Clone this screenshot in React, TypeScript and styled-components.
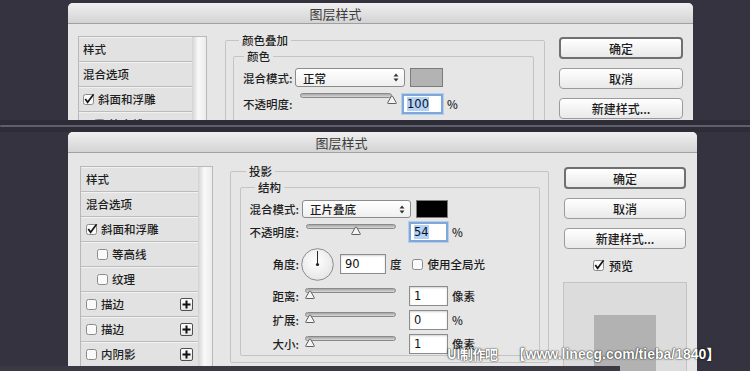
import React from 'react';
import styled, { createGlobalStyle, css } from 'styled-components';

const CJK = `"Noto Sans CJK SC", "Noto Sans", sans-serif`;
const NUM = `"DejaVu Sans", "Liberation Sans", sans-serif`;

const GlobalStyle = createGlobalStyle`
  html, body {
    margin: 0;
    padding: 0;
    background: #34333f;
  }
  body {
    font-family: ${CJK};
    color: #222;
  }
`;

const Screen = styled.div`
  position: relative;
  width: 750px;
  height: 371px;
  display: flex;
  flex-direction: column;
  overflow: hidden;
  background: #34333f;
`;

const Slice = styled.div<{ $height?: number; $top?: number; $left: number }>`
  flex: ${(p) => (p.$height ? 'none' : '1')};
  height: ${(p) => (p.$height ? `${p.$height}px` : 'auto')};
  min-height: 0;
  box-sizing: border-box;
  padding: ${(p) => p.$top ?? 0}px 0 0 ${(p) => p.$left}px;
  overflow: hidden;
`;

const Seam = styled.div`
  flex: none;
  height: 12px;
  box-sizing: border-box;
  padding-top: 5px;
  background: #2e2d37;
`;

const SeamLine = styled.div`
  height: 2px;
  background: #5f5e6d;
  border-radius: 2px 0 0 2px;
`;

const Window = styled.div<{ $width: number }>`
  width: ${(p) => p.$width}px;
  height: 100%;
  display: flex;
  flex-direction: column;
  background: #e6e6e6;
  border-radius: 5px 5px 0 0;
  overflow: hidden;
`;

const TitleBar = styled.div<{ $shift: number }>`
  flex: none;
  height: 21px;
  box-sizing: border-box;
  display: flex;
  align-items: center;
  justify-content: center;
  padding-right: ${(p) => p.$shift * 2}px;
  background: linear-gradient(#f0f0f0, #d3d3d3);
  border-bottom: 1px solid #a0a0a0;
  font-size: 13px;
  color: #3c3c3c;
`;

const Body = styled.div<{ $pad: string }>`
  flex: 1;
  min-height: 0;
  display: flex;
  align-items: flex-start;
  padding: ${(p) => p.$pad};
`;

const Column = styled.div<{ $width: number; $ml?: number; $mt?: number }>`
  flex: none;
  width: ${(p) => p.$width}px;
  margin: ${(p) => p.$mt ?? 0}px 0 0 ${(p) => p.$ml ?? 0}px;
  box-sizing: border-box;
  display: flex;
  flex-direction: column;
`;

/* ---- style list ---- */

const StyleList = styled.div<{ $width: number; $mt: number }>`
  flex: none;
  width: ${(p) => p.$width}px;
  margin-top: ${(p) => p.$mt}px;
  box-sizing: border-box;
  display: flex;
  border: 1px solid #b8b8b8;
  background: #e2e2e2;
`;

const ListItems = styled.div`
  flex: 1;
  display: flex;
  flex-direction: column;
`;

const ListTrack = styled.div`
  flex: none;
  width: 14px;
  background: linear-gradient(to right, #d2d2d2, #f9f9f9 45%, #ececec);
`;

const ListRow = styled.div<{ $indent: number }>`
  height: 25px;
  box-sizing: border-box;
  display: flex;
  align-items: center;
  gap: 4px;
  padding: 0 5px 0 ${(p) => p.$indent}px;
  border-bottom: 1px solid #bcbcbc;
  box-shadow: inset 0 1px 0 #f2f2f2;
  font-size: 11.5px;
  font-weight: 500;
  color: #1e1e1e;
`;

const PlusBox = styled.span`
  margin-left: auto;
  width: 13px;
  height: 13px;
  box-sizing: border-box;
  display: flex;
  align-items: center;
  justify-content: center;
  border: 1px solid #4f4f4f;
  border-radius: 2px;
  background: linear-gradient(#ffffff, #e6e6e6);
`;

const CheckSvg = styled.svg`
  flex: none;
  overflow: visible;
`;

const Check = ({ on }: { on?: boolean }) => (
  <CheckSvg width="11" height="11" viewBox="0 0 11 11">
    <rect x="0.5" y="0.5" width="10" height="10" rx="2" fill="#fafafa" stroke="#8a8a8a" />
    {on && <path d="M2.3 5 L4.6 8.3 L10.6 0.2" fill="none" stroke="#151515" strokeWidth="1.7" />}
  </CheckSvg>
);

const Plus = () => (
  <PlusBox>
    <svg width="9" height="9" viewBox="0 0 9 9">
      <path d="M4.5 0.5 V8.5 M0.5 4.5 H8.5" stroke="#111" strokeWidth="2" />
    </svg>
  </PlusBox>
);

type Entry = { label: string; check?: boolean; on?: boolean; sub?: boolean; plus?: boolean };

const entries: Entry[] = [
  { label: '样式' },
  { label: '混合选项' },
  { label: '斜面和浮雕', check: true, on: true },
  { label: '等高线', check: true, sub: true },
  { label: '纹理', check: true, sub: true },
  { label: '描边', check: true, plus: true },
  { label: '描边', check: true, plus: true },
  { label: '内阴影', check: true, plus: true },
];

const Styles = ({ width, mt, indent, rows }: { width: number; mt: number; indent: number; rows: number }) => (
  <StyleList $width={width} $mt={mt}>
    <ListItems>
      {entries.slice(0, rows).map((e, i) => (
        <ListRow key={i} $indent={e.sub ? indent + 11 : indent}>
          {e.check && <Check on={e.on} />}
          {e.label}
          {e.plus && <Plus />}
        </ListRow>
      ))}
    </ListItems>
    <ListTrack />
  </StyleList>
);

/* ---- groups and form ---- */

const Group = styled.fieldset<{ $margin?: string }>`
  margin: ${(p) => p.$margin ?? '0'};
  padding: 0;
  min-width: 0;
  border: 1px solid #c4c4c4;
  border-radius: 2px;
`;

const GroupTitle = styled.legend<{ $ml: number }>`
  margin-left: ${(p) => p.$ml}px;
  padding: 0 3px;
  font-size: 11.5px;
  font-weight: 500;
  line-height: 16px;
  color: #1e1e1e;
`;

const Form = styled.div<{ $pad: string; $gap: number }>`
  display: flex;
  flex-direction: column;
  gap: ${(p) => p.$gap}px;
  padding: ${(p) => p.$pad};
`;

const FormRow = styled.div<{ $h: number }>`
  height: ${(p) => p.$h}px;
  display: flex;
  align-items: center;
`;

const Label = styled.span<{ $w: number }>`
  flex: none;
  width: ${(p) => p.$w}px;
  text-align: right;
  font-size: 11.5px;
  font-weight: 500;
  white-space: nowrap;
  color: #1e1e1e;
`;

const Unit = styled.span<{ $ml?: number }>`
  flex: none;
  margin-left: ${(p) => p.$ml ?? 4}px;
  font-size: 11.5px;
  font-weight: 500;
  color: #1e1e1e;
`;

const Select = styled.div<{ $w: number; $ml: number }>`
  flex: none;
  width: ${(p) => p.$w}px;
  height: 100%;
  margin-left: ${(p) => p.$ml}px;
  box-sizing: border-box;
  display: flex;
  align-items: center;
  justify-content: space-between;
  padding: 0 5px 0 7px;
  border: 1px solid #8b8b8b;
  border-radius: 3px;
  background: linear-gradient(#ffffff, #efefef);
  font-size: 11.5px;
  font-weight: 500;
  color: #1e1e1e;
`;

const Swatch = styled.div<{ $w: number; $ml: number; $color: string }>`
  flex: none;
  width: ${(p) => p.$w}px;
  height: 100%;
  margin-left: ${(p) => p.$ml}px;
  box-sizing: border-box;
  border: 1px solid #7c7c7c;
  background: ${(p) => p.$color};
`;

const Field = styled.div<{ $w: number; $ml: number; $focus?: boolean }>`
  flex: none;
  width: ${(p) => p.$w}px;
  height: 20px;
  margin-left: ${(p) => p.$ml}px;
  box-sizing: border-box;
  display: flex;
  align-items: center;
  padding-left: 4px;
  border: 1px solid #8c8c8c;
  background: #fff;
  box-shadow: inset 0 1px 2px rgba(0, 0, 0, 0.18);
  font-family: ${NUM};
  font-size: 11.5px;
  color: #111;
  ${(p) =>
    p.$focus &&
    css`
      padding-left: 3px;
      border: 2px solid #7ea7da;
      box-shadow: 0 0 0 1px #b6cdeb;
    `}
`;

const Selected = styled.span`
  background: #b2d2fa;
`;

const SliderBox = styled.div<{ $w: number; $ml: number; $dy?: number }>`
  position: relative;
  flex: none;
  align-self: flex-start;
  width: ${(p) => p.$w}px;
  height: 20px;
  margin: ${(p) => p.$dy ?? 0}px 0 0 ${(p) => p.$ml}px;
`;

const SliderTrack = styled.div`
  height: 5px;
  margin-top: 2px;
  box-sizing: border-box;
  border: 1px solid #8a8a8a;
  border-radius: 3px;
  background: linear-gradient(#a6a6a6, #d8d8d8);
`;

const SliderThumb = styled.svg<{ $pos: number }>`
  position: absolute;
  top: 4px;
  left: ${(p) => p.$pos}px;
`;

const Slider = ({ w, ml, pos, dy }: { w: number; ml: number; pos: number; dy?: number }) => (
  <SliderBox $w={w} $ml={ml} $dy={dy}>
    <SliderTrack />
    <SliderThumb $pos={pos} width="10" height="9" viewBox="0 0 10 9">
      <path d="M1.2 8.5 Q0.3 8.5 0.8 7.6 L4.4 1.2 Q5 0.3 5.6 1.2 L9.2 7.6 Q9.7 8.5 8.8 8.5 Z" fill="#f4f4f4" stroke="#5e5e5e" />
    </SliderThumb>
  </SliderBox>
);

const Arrows = () => (
  <svg width="6" height="9" viewBox="0 0 6 9">
    <path d="M3 0.5 L5.5 3.5 H0.5 Z M3 8.5 L5.5 5.5 H0.5 Z" fill="#333" />
  </svg>
);

const DialSvg = styled.svg<{ $ml: number }>`
  flex: none;
  margin-left: ${(p) => p.$ml}px;
`;

const Dial = ({ ml }: { ml: number }) => (
  <DialSvg $ml={ml} width="33" height="33" viewBox="0 0 33 33">
    <defs>
      <radialGradient id="dialFill" cx="0.45" cy="0.4" r="0.7">
        <stop offset="0" stopColor="#ffffff" />
        <stop offset="1" stopColor="#e2e2e2" />
      </radialGradient>
    </defs>
    <circle cx="16.5" cy="16.5" r="15.8" fill="url(#dialFill)" stroke="#8c8c8c" />
    <path d="M16.5 16.5 V3" stroke="#2a2a2a" strokeWidth="1" />
    <circle cx="16.5" cy="16.5" r="1.6" fill="#222" />
  </DialSvg>
);

const InlineCheck = styled.span<{ $ml: number }>`
  display: flex;
  align-items: center;
  gap: 5px;
  margin-left: ${(p) => p.$ml}px;
  font-size: 11.5px;
  font-weight: 500;
  color: #1e1e1e;
`;

/* ---- buttons and preview ---- */

const DlgButton = styled.button<{ $primary?: boolean; $mt?: number }>`
  width: 100%;
  height: 21px;
  margin: ${(p) => p.$mt ?? 0}px 0 0;
  padding: 0;
  box-sizing: border-box;
  border: 1px solid #9b9b9b;
  border-radius: 4px;
  background: linear-gradient(#ffffff, #e9e9e9);
  font-family: ${CJK};
  font-size: 12px;
  font-weight: 500;
  color: #1c1c1c;
  ${(p) =>
    p.$primary &&
    css`
      height: 22px;
      border: 2px solid #707070;
    `}
`;

const PreviewToggle = styled.label`
  display: flex;
  align-items: center;
  gap: 5px;
  height: 14px;
  margin-top: 9px;
  padding-left: 29px;
  font-size: 12px;
  font-weight: 500;
  color: #1e1e1e;
`;

const PreviewBox = styled.div`
  height: 100px;
  margin: 10px -1px 0;
  box-sizing: border-box;
  padding: 32px 0 0 30px;
  border: 1px solid #c3c3c3;
  background: #dcdcdc;
`;

const PreviewShape = styled.div`
  width: 62px;
  height: 80px;
  background: #b2b2b2;
`;

const Buttons = ({ width, ml, mt, preview }: { width: number; ml: number; mt: number; preview?: boolean }) => (
  <Column $width={width} $ml={ml} $mt={mt}>
    <DlgButton $primary>确定</DlgButton>
    <DlgButton $mt={9}>取消</DlgButton>
    <DlgButton $mt={9}>新建样式...</DlgButton>
    {preview && (
      <>
        <PreviewToggle>
          <Check on />
          预览
        </PreviewToggle>
        <PreviewBox>
          <PreviewShape />
        </PreviewBox>
      </>
    )}
  </Column>
);

/* ---- overlays ---- */

const BottomStrip = styled.div`
  position: absolute;
  left: 0;
  bottom: 0;
  width: 620px;
  height: 5px;
  background: #3a3944;
`;

const Watermark = styled.div`
  position: absolute;
  left: 447px;
  top: 343px;
  display: flex;
  align-items: center;
  gap: 14px;
  color: #ffffff;
  text-shadow: 0 0 2px rgba(0, 0, 0, 0.75), 0 0 1px rgba(0, 0, 0, 0.9);
  pointer-events: none;
  white-space: nowrap;
`;

const WmBrand = styled.span`
  font-family: ${CJK};
  font-size: 13px;
  font-weight: 700;
  letter-spacing: -0.5px;
`;

const WmUrl = styled.span`
  font-family: "Liberation Sans", ${CJK};
  font-size: 14px;
  font-weight: 700;
`;

export default function App() {
  return (
    <Screen>
      <GlobalStyle />
      <Slice $height={120} $top={3} $left={68}>
        <Window $width={625}>
          <TitleBar $shift={45}>图层样式</TitleBar>
          <Body $pad="8px 10px 0 10px">
            <Styles width={129} mt={4} indent={4} rows={4} />
            <Column $width={320} $ml={18}>
              <Group>
                <GroupTitle $ml={13}>颜色叠加</GroupTitle>
                <Group $margin="0 10px 8px 7px">
                  <GroupTitle $ml={10}>颜色</GroupTitle>
                  <Form $pad="4px 0 8px 9px" $gap={7}>
                    <FormRow $h={19}>
                      <Label $w={48}>混合模式:</Label>
                      <Select $w={110} $ml={4}>
                        正常
                        <Arrows />
                      </Select>
                      <Swatch $w={33} $ml={5} $color="#b3b3b3" />
                    </FormRow>
                    <FormRow $h={19}>
                      <Label $w={48}>不透明度:</Label>
                      <Slider w={92} ml={9} pos={87} dy={-3} />
                      <Field $w={41} $ml={10} $focus>
                        <Selected>100</Selected>
                      </Field>
                      <Unit>%</Unit>
                    </FormRow>
                  </Form>
                </Group>
              </Group>
            </Column>
            <Buttons width={124} ml={14} mt={5} />
          </Body>
        </Window>
      </Slice>

      <Seam>
        <SeamLine />
      </Seam>

      <Slice $left={68}>
        <Window $width={629}>
          <TitleBar $shift={41}>图层样式</TitleBar>
          <Body $pad="10px 11px 0 12px">
            <Styles width={133} mt={3} indent={5} rows={8} />
            <Column $width={319} $ml={17}>
              <Group>
                <GroupTitle $ml={15}>投影</GroupTitle>
                <Group $margin="0 8px 6px 9px">
                  <GroupTitle $ml={14}>结构</GroupTitle>
                  <Form $pad="5px 0 1px 8px" $gap={4}>
                    <FormRow $h={18}>
                      <Label $w={50}>混合模式:</Label>
                      <Select $w={109} $ml={3}>
                        正片叠底
                        <Arrows />
                      </Select>
                      <Swatch $w={32} $ml={5} $color="#000000" />
                    </FormRow>
                    <FormRow $h={20}>
                      <Label $w={50}>不透明度:</Label>
                      <Slider w={90} ml={7} pos={45} />
                      <Field $w={39} $ml={13} $focus>
                        <Selected>54</Selected>
                      </Field>
                      <Unit>%</Unit>
                    </FormRow>
                    <FormRow $h={36}>
                      <Label $w={50}>角度:</Label>
                      <Dial ml={2} />
                      <Field $w={46} $ml={6}>90</Field>
                      <Unit>度</Unit>
                      <InlineCheck $ml={10}>
                        <Check />
                        使用全局光
                      </InlineCheck>
                    </FormRow>
                    <FormRow $h={20}>
                      <Label $w={50}>距离:</Label>
                      <Slider w={91} ml={6} pos={0} />
                      <Field $w={39} $ml={13}>1</Field>
                      <Unit>像素</Unit>
                    </FormRow>
                    <FormRow $h={20}>
                      <Label $w={50}>扩展:</Label>
                      <Slider w={91} ml={6} pos={0} />
                      <Field $w={39} $ml={13}>0</Field>
                      <Unit>%</Unit>
                    </FormRow>
                    <FormRow $h={20}>
                      <Label $w={50}>大小:</Label>
                      <Slider w={91} ml={6} pos={0} />
                      <Field $w={39} $ml={13}>1</Field>
                      <Unit>像素</Unit>
                    </FormRow>
                  </Form>
                </Group>
              </Group>
            </Column>
            <Buttons width={122} ml={15} mt={4} preview />
          </Body>
        </Window>
      </Slice>

      <BottomStrip />
      <Watermark>
        <WmBrand>UI制作吧</WmBrand>
        <WmUrl>【www.linecg.com/tieba/1840】</WmUrl>
      </Watermark>
    </Screen>
  );
}
